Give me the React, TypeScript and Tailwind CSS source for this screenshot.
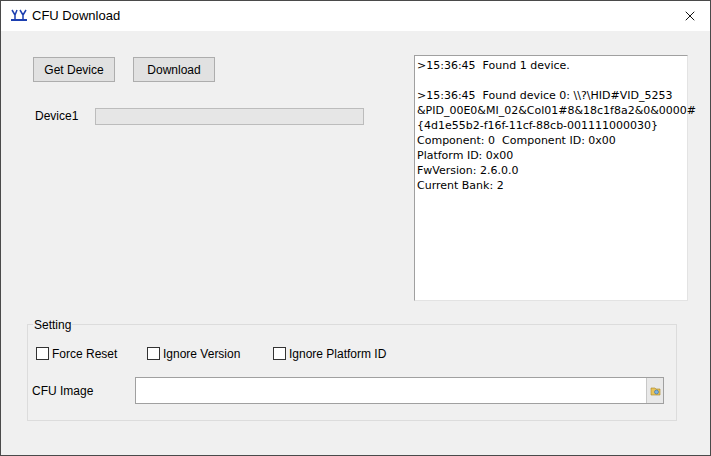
import { X } from 'lucide-react'

const font = { fontFamily: '"Liberation Sans", "Noto Sans CJK SC", sans-serif' }

function Check({ label, w }: { label: string; w: string }) {
  return (
    <label className={`flex items-center gap-[3px] ${w}`}>
      <span className="w-[13px] h-[13px] border border-[#333] bg-white" />
      <span>{label}</span>
    </label>
  )
}

export default function App() {
  return (
    <div style={font} className="w-[711px] h-[456px] border border-[#4a4a4a] bg-[#f0f0f0] text-[12px] text-black flex flex-col">
      <div className="h-[30px] bg-white flex items-center pl-[9px] pr-[12px] shrink-0">
        <svg width="18" height="14" viewBox="0 0 18 14" className="mr-[4px]">
          <path d="M2 1l3 5M7 1l-2 5M10 1l3 5M16 1l-3 5M5 6v4M13 6v4" stroke="#1c3fb0" strokeWidth="1.5" fill="none" />
          <path d="M1 11h16" stroke="#1c3fb0" strokeWidth="2" />
        </svg>
        <span className="text-[13px]">CFU Download</span>
        <X size={16} strokeWidth={1.4} className="ml-auto" />
      </div>
      <div className="flex pt-[26px]">
        <div className="w-[413px] pl-[32px]">
          <div className="flex gap-[18px]">
            <button className="w-[82px] h-[25px] bg-[#e1e1e1] border border-[#adadad]">Get Device</button>
            <button className="w-[82px] h-[25px] bg-[#e1e1e1] border border-[#adadad]">Download</button>
          </div>
          <div className="flex items-center mt-[25px]">
            <span className="w-[62px] pl-[2px]">Device1</span>
            <div className="w-[269px] h-[17px] bg-[#e6e6e6] border border-[#bcbcbc]" />
          </div>
        </div>
        <div className="w-[274px] h-[246px] -mt-[2px] bg-white border border-[#a0a0a0] border-r-[#e3e3e3] border-b-[#e3e3e3] px-[2px] pt-[2px] leading-[15px] text-[12px]" style={{ fontFamily: '"DejaVu Sans", sans-serif', fontSize: '11px' }}>
          <div>&gt;15:36:45&nbsp;&nbsp;Found 1 device.</div>
          <div className="h-[15px]" />
          <div>&gt;15:36:45&nbsp;&nbsp;Found device 0: \\?\HID#VID_5253</div>
          <div>&amp;PID_00E0&amp;MI_02&amp;Col01#8&amp;18c1f8a2&amp;0&amp;0000#</div>
          <div>{'{4d1e55b2-f16f-11cf-88cb-001111000030}'}</div>
          <div>Component: 0&nbsp;&nbsp;Component ID: 0x00</div>
          <div>Platform ID: 0x00</div>
          <div>FwVersion: 2.6.0.0</div>
          <div>Current Bank: 2</div>
        </div>
      </div>
      <div className="ml-[26px] mt-[23px] w-[650px] h-[97px] border border-[#dcdcdc] relative">
        <span className="absolute -top-[9px] left-[5px] bg-[#f0f0f0] px-[1px]">Setting</span>
        <div className="flex pl-[8px] pt-[21px] h-[15px] items-center box-content">
          <Check label="Force Reset" w="w-[111px]" />
          <Check label="Ignore Version" w="w-[126px]" />
          <Check label="Ignore Platform ID" w="w-[140px]" />
        </div>
        <div className="flex items-center pl-[4px] mt-[16px]">
          <span className="w-[103px]">CFU Image</span>
          <div className="w-[529px] h-[27px] bg-white border border-[#a0a0a0] flex justify-end">
            <div className="w-[17px] h-full bg-[#e9e9e9] border-l border-[#c8c8c8] flex items-center justify-center">
              <svg width="11" height="11" viewBox="0 0 11 11">
                <path d="M1 3h4l1 1h4v6H1z" fill="#e8c35a" stroke="#a88420" strokeWidth="0.6" />
                <circle cx="6.5" cy="7" r="2" fill="#7fb2e0" stroke="#2e6aa8" strokeWidth="0.6" />
              </svg>
            </div>
          </div>
        </div>
      </div>
    </div>
  )
}
